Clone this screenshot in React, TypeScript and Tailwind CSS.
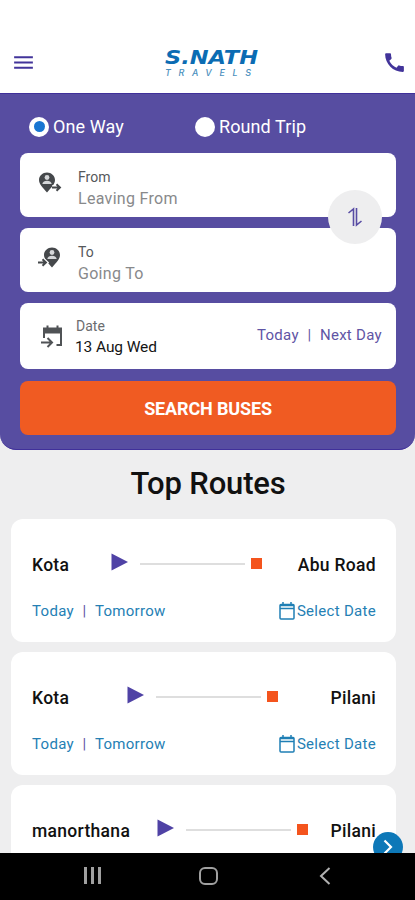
import { MdMenu, MdCall } from "react-icons/md";

const routes = [
  { from: "Kota", to: "Abu Road", showDates: true },
  { from: "Kota", to: "Pilani", showDates: true },
  { from: "manorthana", to: "Pilani", showDates: false },
];

function Logo() {
  return (
    <svg width="96" height="31" viewBox="0 0 96 31" className="overflow-visible italic">
      <text x="1" y="17" fontSize="19.5" fontWeight="700" fill="#0b6cb3" textLength="93" lengthAdjust="spacingAndGlyphs" className="font-['DejaVu_Sans',sans-serif]">
        S.NATH
      </text>
      <text x="1" y="29" fontSize="9" fontWeight="500" fill="#4b8fbd" textLength="86" className="font-['Inter',sans-serif]">
        TRAVELS
      </text>
    </svg>
  );
}

function Pin({ to = false }: { to?: boolean }) {
  return (
    <svg width="24" height="24" viewBox="0 0 24 24" fill="none" className="mt-[3px]">
      <g transform={to ? "translate(5 -1)" : "translate(0 -1)"}>
        <path d="M9 1.500C4.700 1.500 1 4.700 1 9c0 4.400 3.800 7.600 8 12.500C13.200 16.600 17 13.400 17 9c0-4.300-3.700-7.500-8-7.500z" fill="#45484b" />
        <circle cx="9" cy="6.500" r="2.400" fill="#d5d7d9" />
        <path d="M4.300 13c.5-2.400 2.300-3.300 4.700-3.300s4.200 .9 4.700 3.300z" fill="#d5d7d9" />
      </g>
      <g transform={to ? "translate(0 -1)" : "translate(14 -1)"}>
        <path d="M0 16.500h7M4.500 13.500l3.300 3-3.300 3" stroke="#fff" strokeWidth="4.500" />
        <path d="M0 16.500h7.500M4.500 13.300l3.400 3.200-3.400 3.200" stroke="#45484b" strokeWidth="2" />
      </g>
    </svg>
  );
}

function DateIcon() {
  return (
    <svg width="23" height="23" viewBox="0 0 23 23" fill="none" stroke="#505356" strokeWidth="2">
      <path d="M3 13V3.500M20 3.500V20h-4.500" />
      <path d="M2 2.500h19v6H2z" fill="#505356" stroke="none" />
      <path d="M6.500 0.500v4M16.500 0.500v4" />
      <path d="M0 17.500h10M6.500 13l4.500 4.500L6.500 22" />
    </svg>
  );
}

function CalendarIcon() {
  return (
    <svg width="16" height="18" viewBox="0 0 16 18" fill="none" stroke="#1f7fb5" strokeWidth="1.500">
      <rect x="1" y="2.500" width="14" height="14.500" rx="1" />
      <path d="M1 3.500h14M1 6.500h14M4 0v3M12 0v3" />
    </svg>
  );
}

function Field({ label, text, to }: { label: string; text: string; to?: boolean }) {
  return (
    <div className="flex h-16 rounded-lg bg-white pl-[18px] pt-4">
      <Pin to={to} />
      <div className="flex flex-col pl-4">
        <p className="text-[14px] leading-4 text-[#55585b]">{label}</p>
        <p className="pt-[3px] text-[16px] leading-[22px] tracking-[0.3px] text-[#88898b]">{text}</p>
      </div>
    </div>
  );
}

function RouteCard({ from, to, showDates }: { from: string; to: string; showDates: boolean }) {
  return (
    <div className="flex h-[123px] w-[385px] shrink-0 flex-col rounded-xl bg-white pt-[34px] pr-5 pl-[21px]">
      <div className="flex h-6 items-center justify-between text-[17.5px] font-medium tracking-[0.3px] text-[#111]">
        <p>{from}</p>
        <div className="flex items-center pl-[5px]">
          <svg width="17" height="18" viewBox="0 0 17 18" className="-mt-1.5">
            <path d="M0.500 0.500L17 9L0.500 17.500z" fill="#4f42a5" />
          </svg>
          <div className="-mt-0.5 ml-3 mr-1.5 h-[2px] w-[105px] bg-[#dedede]"></div>
          <div className="-mt-[3px] h-[11px] w-[11px] bg-[#f4541d]"></div>
        </div>
        <p>{to}</p>
      </div>
      {showDates && (
        <div className="mt-[23px] flex h-[22px] items-center justify-between text-[15px] tracking-[0.3px] text-[#2580b4]">
          <div className="flex">
            <p>Today</p>
            <p className="w-[21px] text-center text-[#5d51a6]">|</p>
            <p>Tomorrow</p>
          </div>
          <div className="flex items-center gap-0.5">
            <CalendarIcon />
            <p>Select Date</p>
          </div>
        </div>
      )}
    </div>
  );
}

export default function App() {
  return (
    <div className="flex h-[900px] w-[415px] flex-col overflow-hidden bg-[#eeeeef] font-['Roboto',sans-serif]">
      <div className="flex h-[93px] shrink-0 items-end justify-between bg-white pb-[15px] pl-[11px] pr-2">
        <MdMenu size={25} color="#42349a" className="mb-[3px]" />
        <div className="pl-1.5">
          <Logo />
        </div>
        <MdCall size={25} color="#42349a" className="mb-[3px]" />
      </div>

      <div className="flex h-[357px] shrink-0 flex-col rounded-b-2xl border-y border-[#40309a] bg-[#574da1] pl-5 pr-[19px]">
        <div className="flex h-[59px] items-center pl-[9px] pt-[6px] text-[18px] tracking-[0.1px] text-white">
          <div className="flex w-[166px] items-center gap-1">
            <div className="flex h-5 w-5 items-center justify-center rounded-full bg-white">
              <div className="h-[11px] w-[11px] rounded-full bg-[#1976d2]"></div>
            </div>
            <p>One Way</p>
          </div>
          <div className="flex items-center gap-1">
            <div className="h-5 w-5 rounded-full bg-white"></div>
            <p>Round Trip</p>
          </div>
        </div>
        <div className="relative flex flex-col gap-[11px]">
          <Field label="From" text="Leaving From" />
          <Field label="To" text="Going To" to />
          <div className="absolute right-[14px] top-[37px] flex h-[54px] w-[54px] items-center justify-center rounded-full bg-[#eeeeef]">
            <svg width="16" height="20" viewBox="0 0 16 20" fill="none" stroke="#584ca4" strokeWidth="1.600">
              <path d="M1.500 6L6.500 2V19M9.500 1V18L14.500 14" />
            </svg>
          </div>
        </div>
        <div className="mt-[11px] flex h-[66px] items-center rounded-lg bg-white pl-[21px] pr-[14px]">
          <DateIcon />
          <div className="flex flex-col pt-[3px] pl-[11px]">
            <p className="pl-px text-[14px] leading-4 text-[#6b6c6f]">Date</p>
            <p className="pt-0.5 text-[15.5px] leading-[22px] tracking-[-0.1px] text-[#151515]">13 Aug Wed</p>
          </div>
          <div className="-mt-0.5 ml-auto flex text-[15px] tracking-[0.3px] text-[#5f55a5]">
            <p>Today</p>
            <p className="w-[21px] text-center">|</p>
            <p>Next Day</p>
          </div>
        </div>
        <button className="mt-3 flex h-[54px] shrink-0 items-center justify-center rounded-lg bg-[#f05b22] text-[18px] font-bold tracking-[-0.15px] text-white">
          SEARCH BUSES
        </button>
      </div>

      <h1 className="h-[69px] shrink-0 pt-[15px] pl-px text-center text-[31px] leading-[38px] font-medium tracking-[-0.15px] text-[#111]">Top Routes</h1>

      <div className="relative flex h-[334px] shrink-0 flex-col gap-[10px] overflow-hidden pl-[11px]">
        {routes.map((route, i) => (
          <RouteCard key={i} from={route.from} to={route.to} showDates={route.showDates} />
        ))}
        <div className="absolute left-[373px] top-[313px] flex h-[30px] w-[30px] items-center justify-center rounded-full bg-[#0d78b8]">
          <svg width="10" height="16" viewBox="0 0 10 16" fill="none" stroke="#fff" strokeWidth="2.200">
            <path d="M1.500 1.500L8 8L1.500 14.500" />
          </svg>
        </div>
      </div>

      <div className="flex h-[47px] shrink-0 items-center bg-black pb-0.5 pl-[84px]">
        <div className="flex gap-1">
          <div className="h-[17px] w-[3px] bg-[#a0a0a0]"></div>
          <div className="h-[17px] w-[3px] bg-[#a0a0a0]"></div>
          <div className="h-[17px] w-[3px] bg-[#a0a0a0]"></div>
        </div>
        <div className="ml-[98px] h-[18px] w-[19px] rounded-md border-2 border-[#a0a0a0]"></div>
        <svg width="12" height="18" viewBox="0 0 12 18" fill="none" stroke="#b0b0b0" strokeWidth="2" className="ml-[101px]">
          <path d="M10.500 1L2 9L10.500 17" />
        </svg>
      </div>
    </div>
  );
}
